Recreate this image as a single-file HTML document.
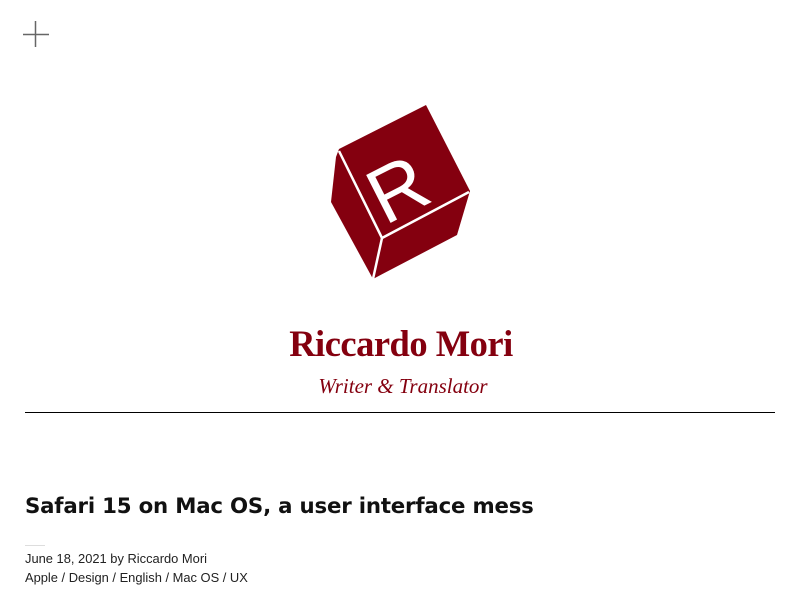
<!DOCTYPE html>
<html><head><meta charset="utf-8"><style>
body{margin:0;width:800px;height:600px;background:#fff;overflow:hidden;position:relative;font-family:"DejaVu Sans","Liberation Sans",sans-serif}
.abs{position:absolute}
</style></head><body>
<svg class="abs" style="left:0;top:0" width="800" height="300">
<path d="M23 34.5H49M35.5 21V47" stroke="#666" stroke-width="1.5" fill="none"/>
<polygon points="339,149 426,105 470,191 457,235 373,279 331,202 336,157" fill="#84000f"/>
<path d="M339 151L382 238L469 192M382 238L373 279" stroke="#fff" stroke-width="2.5" fill="none"/>
<text x="0" y="0" transform="translate(410,213) rotate(-27)" text-anchor="middle" font-family="Liberation Sans,sans-serif" font-size="78" fill="#fff">R</text>
</svg>
<div class="abs" style="left:0;width:802px;top:322px;text-align:center;font-family:'Liberation Serif',serif;font-weight:bold;font-size:36.5px;color:#84000f;letter-spacing:-0.5px">Riccardo Mori</div>
<div class="abs" style="left:0;width:806px;top:374px;text-align:center;font-family:'Liberation Serif',serif;font-style:italic;font-size:21px;color:#84000f">Writer &amp; Translator</div>
<div class="abs" style="left:25px;width:750px;top:412px;height:1px;background:#000"></div>
<div class="abs" style="left:25px;top:494px;font-size:21.3px;font-weight:bold;color:#111;letter-spacing:-0.2px">Safari 15 on Mac OS, a user interface mess</div>
<div class="abs" style="left:25px;top:545px;width:20px;height:1px;background:#ddd"></div>
<div class="abs" style="left:25px;top:549px;font-family:'Liberation Sans',sans-serif;font-size:12.9px;line-height:19px;color:#222">June 18, 2021 by Riccardo Mori<br>Apple / Design / English / Mac OS / UX</div>
</body></html>
